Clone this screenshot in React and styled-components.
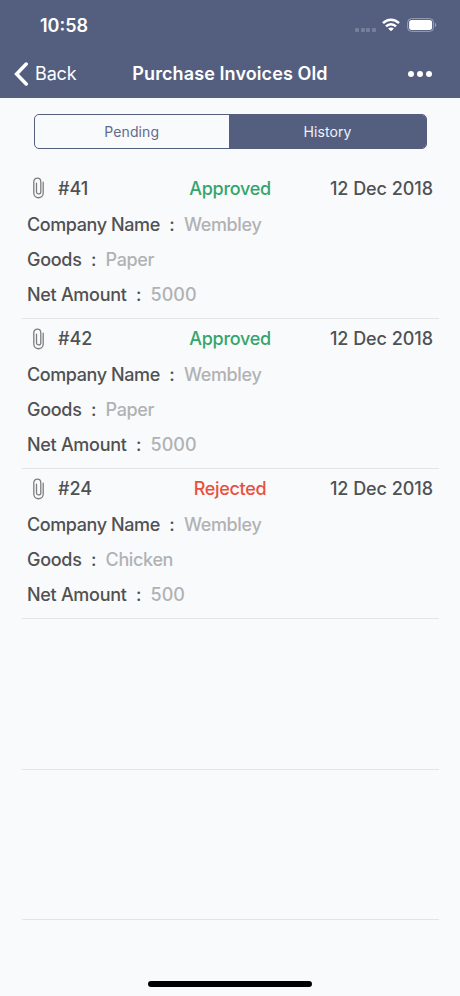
// App.jsx
import React from 'react';
import styled, { createGlobalStyle } from 'styled-components';

const invoices = [
  { id: 41, status: 'Approved', date: '12 Dec 2018', company: 'Wembley', goods: 'Paper', amount: '5000' },
  { id: 42, status: 'Approved', date: '12 Dec 2018', company: 'Wembley', goods: 'Paper', amount: '5000' },
  { id: 24, status: 'Rejected', date: '12 Dec 2018', company: 'Wembley', goods: 'Chicken', amount: '500' },
];

const WifiIcon = () => (
  <svg width="18" height="14" viewBox="0 0 18 14" fill="none" stroke="#fff" strokeWidth="2.5">
    <path d="M1 5.1C5.5 0.5 12.5 0.5 17 5.1" />
    <path d="M4 8.3C6.9 5.4 11.1 5.4 14 8.3" />
    <path d="M9 13.3L6.1 10.5C7.7 9 10.3 9 11.9 10.5Z" fill="#fff" stroke="none" />
  </svg>
);

const BatteryIcon = () => (
  <svg width="30" height="14" viewBox="0 0 30 14">
    <rect x="0.6" y="0.6" width="26" height="12.8" rx="4" fill="none" stroke="#fff" strokeOpacity="0.4" />
    <rect x="2.1" y="2.1" width="23" height="9.8" rx="2.6" fill="#fff" />
    <path d="M28 4.8C29.6 5.4 29.6 8.6 28 9.2Z" fill="#fff" fillOpacity="0.4" />
  </svg>
);

const BackIcon = () => (
  <svg width="14" height="24" viewBox="0 0 14 24" fill="none" stroke="#fff" strokeWidth="3.5">
    <path d="M12.2 2L2.6 12L12.2 22" strokeLinecap="round" strokeLinejoin="miter" />
  </svg>
);

const ClipIcon = () => (
  <svg width="12" height="22" viewBox="0 0 12 22" fill="none" stroke="#7c7d7e" strokeWidth="1.3" strokeLinecap="round">
    <path d="M10.2 5.2V16C10.2 22.3 0.8 22.3 0.8 16V4.8C0.8 -0.1 7.8 -0.1 7.8 4.8V14.7C7.8 17.7 3.5 17.7 3.5 14.7V6.2" />
  </svg>
);

const App = () => {
  return (
    <Screen>
      <GlobalStyle />
      <Header>
        <StatusBar>
          <Time>10:58</Time>
          <StatusIcons>
            <Signal><i /><i /><i /><i /></Signal>
            <WifiIcon />
            <BatteryIcon />
          </StatusIcons>
        </StatusBar>
        <NavBar>
          <BackButton><BackIcon />Back</BackButton>
          <Title>Purchase Invoices Old</Title>
          <MoreButton aria-label="More"><i /><i /><i /></MoreButton>
        </NavBar>
      </Header>
      <Segments>
        <Segment>Pending</Segment>
        <Segment $active>History</Segment>
      </Segments>
      <List>
        {invoices.map((invoice) => (
          <Row key={invoice.id}>
            <RowTop>
              <Reference><ClipIcon />#{invoice.id}</Reference>
              <Status $status={invoice.status}>{invoice.status}</Status>
              <DateText>{invoice.date}</DateText>
            </RowTop>
            <Field><Label $tight>Company Name</Label><Colon>:</Colon><Value>{invoice.company}</Value></Field>
            <Field><Label>Goods</Label><Colon>:</Colon><Value>{invoice.goods}</Value></Field>
            <Field><Label>Net Amount</Label><Colon>:</Colon><Value $numeric>{invoice.amount}</Value></Field>
          </Row>
        ))}
        <Row />
        <Row />
      </List>
      <HomeArea><HomeIndicator /></HomeArea>
    </Screen>
  );
};

export default App;

const GlobalStyle = createGlobalStyle`
  * {
    box-sizing: border-box;
  }

  body {
    margin: 0;
    background: #f9fafc;
    font-family: Inter, 'Liberation Sans', sans-serif;
  }
`;

const Screen = styled.div`
  display: flex;
  flex-direction: column;
  width: 460px;
  height: 996px;
  overflow: hidden;
  background: #f9fafc;
`;

const Header = styled.header`
  height: 98px;
  flex-shrink: 0;
  background: #545f80;
  color: #fff;
`;

const StatusBar = styled.div`
  display: flex;
  justify-content: space-between;
  height: 50px;
  padding: 0 23px 0 40px;
`;

const Time = styled.span`
  padding-top: 15px;
  font-size: 18px;
  line-height: 22px;
  font-weight: 600;
`;

const StatusIcons = styled.div`
  display: flex;
  align-items: center;
  height: 14px;
  margin-top: 18px;

  svg + svg {
    margin-left: 7px;
  }
`;

const Signal = styled.div`
  display: flex;
  gap: 1.6px;
  margin: 9px 6px 0 0;

  i {
    width: 4px;
    height: 4px;
    border-radius: 1px;
    background: #757f9b;
  }
`;

const NavBar = styled.nav`
  display: grid;
  grid-template-columns: 118px 1fr 118px;
  align-items: center;
  height: 48px;
`;

const BackButton = styled.button`
  display: flex;
  align-items: center;
  gap: 7px;
  padding: 0 0 0 14px;
  border: 0;
  background: none;
  color: #fff;
  font: 400 18px/24px Inter, sans-serif;
  letter-spacing: -0.15px;
`;

const Title = styled.h1`
  margin: 0;
  font-size: 18px;
  line-height: 24px;
  font-weight: 600;
  letter-spacing: 0.1px;
  text-align: center;
  white-space: nowrap;
`;

const MoreButton = styled.button`
  display: flex;
  justify-content: flex-end;
  gap: 3px;
  padding: 0 28px 0 0;
  border: 0;
  background: none;

  i {
    width: 6px;
    height: 6px;
    border-radius: 50%;
    background: #fff;
  }
`;

const Segments = styled.div`
  display: flex;
  flex-shrink: 0;
  width: 393px;
  height: 35px;
  margin: 16px 0 0 33.5px;
  border: 1px solid #545f80;
  border-radius: 5px;
  overflow: hidden;
`;

const Segment = styled.button`
  width: ${({ $active }) => ($active ? '197px' : '194.5px')};
  flex-shrink: 0;
  padding: 0;
  border: 0;
  background: ${({ $active }) => ($active ? '#545f80' : 'transparent')};
  color: ${({ $active }) => ($active ? '#eef1fa' : '#626b8b')};
  font: 400 14px/20px Inter, sans-serif;
  letter-spacing: 0.1px;
`;

const List = styled.ul`
  margin: 19.5px 21px 0 22px;
  padding: 0;
  list-style: none;
`;

const Row = styled.li`
  height: 150.3px;
  padding: 1.5px 6px 0 5px;
  border-bottom: 1px solid #e2e4e6;
  color: #505152;
  font-size: 18px;
  font-weight: 550;
  letter-spacing: -0.3px;
`;

const RowTop = styled.div`
  display: grid;
  grid-template-columns: 122px 1fr 122px;
  align-items: center;
  height: 36.5px;
`;

const Reference = styled.div`
  display: flex;
  align-items: center;
  gap: 13px;
  padding-left: 6px;
  letter-spacing: 0;
`;

const Status = styled.span`
  text-align: center;
  color: ${({ $status }) => ($status === 'Approved' ? '#34a56b' : '#e8503f')};
`;

const DateText = styled.span`
  text-align: right;
  white-space: nowrap;
  letter-spacing: -0.05px;
`;

const Field = styled.div`
  display: flex;
  align-items: center;
  height: 35px;
`;

const Label = styled.span`
  letter-spacing: ${({ $tight }) => ($tight ? '-0.4px' : '-0.3px')};
`;

const Colon = styled.span`
  width: 24px;
  text-align: center;
`;

const Value = styled.span`
  color: #b1b2b3;
  letter-spacing: ${({ $numeric }) => ($numeric ? '0' : '-0.35px')};
`;

const HomeArea = styled.footer`
  display: flex;
  justify-content: center;
  margin-top: auto;
  padding-bottom: 9px;
`;

const HomeIndicator = styled.div`
  width: 164px;
  height: 6px;
  border-radius: 3px;
  background: #000;
`;
